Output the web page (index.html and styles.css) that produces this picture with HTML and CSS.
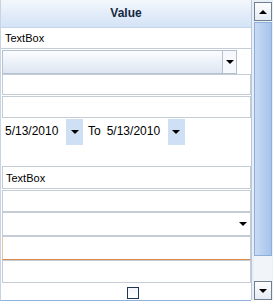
FILE: index.html
```html
<!DOCTYPE html>
<html lang="en">
<head>
    <meta charset="UTF-8">
    <title>Property Grid</title>
    <link rel="stylesheet" href="styles.css">
</head>
<body>
    <div class="grid">
        <div class="table">
            <div class="header">Value</div>

            <div class="row row-text">TextBox</div>

            <div class="row row-combo">
                <div class="combo">
                    <div class="combo-field"></div>
                    <div class="combo-btn"><span class="arrow"></span></div>
                </div>
            </div>

            <div class="row row-3"><div class="box"></div></div>
            <div class="row row-4"><div class="box"></div></div>

            <div class="row row-date">
                <div class="date">
                    <span class="date-text">5/13/2010</span>
                    <span class="date-btn"><span class="arrow"></span></span>
                </div>
                <span class="to">To</span>
                <div class="date">
                    <span class="date-text">5/13/2010</span>
                    <span class="date-btn"><span class="arrow"></span></span>
                </div>
            </div>

            <div class="row row-blank"></div>

            <div class="row row-7"><div class="box">TextBox</div></div>
            <div class="row row-8"><div class="box"></div></div>
            <div class="row row-9"><div class="box drop"><span class="arrow"></span></div></div>
            <div class="row row-10"><div class="box focused"></div></div>
            <div class="row row-11"><div class="box"></div></div>
            <div class="row row-check"><span class="check"></span></div>
        </div>

        <div class="scrollbar">
            <div class="sb-btn"><span class="arrow up"></span></div>
            <div class="sb-thumb"></div>
            <div class="sb-track"></div>
            <div class="sb-btn"><span class="arrow"></span></div>
        </div>
    </div>
</body>
</html>
```

FILE: styles.css
```css
body {
    margin: 0;
    font-family: 'Liberation Sans', Arial, sans-serif;
    font-size: 11px;
    color: #000;
    background: #fff;
}

.grid {
    display: flex;
    width: 274px;
    height: 304px;
}

.table {
    width: 250px;
    height: 300px;
    border-left: 1px solid #c8d4e3;
    border-bottom: 1px solid #8fb0da;
    display: flex;
    flex-direction: column;
}

.header {
    height: 27px;
    line-height: 27px;
    border-bottom: 1px solid #c6d6ea;
    background: linear-gradient(#f3f7fc, #d3e3f6);
    text-align: center;
    font-weight: bold;
    font-size: 12px;
    color: #15283f;
}

.row {
    display: flex;
    align-items: stretch;
    padding: 0 0 0 1px;
}

.row-text {
    height: 20px;
    line-height: 20px;
    padding-left: 4px;
    border-bottom: 1px solid #c4ccd6;
}

.box {
    flex: 1;
    border: 1px solid #c4ccd6;
    background: #fff;
    padding-left: 3px;
    display: flex;
    align-items: center;
}

.row-combo {
    height: 24px;
    padding-top: 1px;
}

.combo {
    width: 233px;
    display: flex;
    border: 1px solid #b6c1cf;
}

.combo-field {
    flex: 1;
    background: linear-gradient(#fbfcfe, #dde7f3);
}

.combo-btn {
    width: 13px;
    border-left: 1px solid #b6c1cf;
    background: #f5f8fc;
    display: flex;
    align-items: center;
    justify-content: center;
}

.arrow {
    width: 0;
    height: 0;
    border-left: 4px solid transparent;
    border-right: 4px solid transparent;
    border-top: 4px solid #000;
}

.arrow.up {
    border-top: none;
    border-bottom: 4px solid #000;
}

.row-3 {
    height: 21px;
}

.row-4 {
    height: 22px;
    padding-top: 1px;
}

.row-date {
    height: 26px;
    padding: 1px 0 0 2px;
    align-items: stretch;
}

.date {
    display: flex;
    align-items: stretch;
    background: #fff;
}

.date-text {
    font-size: 12px;
    line-height: 24px;
    padding-left: 2px;
    width: 61px;
}

.date-btn {
    width: 17px;
    background: #cfdff4;
    display: flex;
    align-items: center;
    justify-content: center;
}

.to {
    font-size: 12px;
    line-height: 24px;
    padding: 0 4px 0 5px;
}

.row-blank {
    height: 21px;
}

.row-7 {
    height: 23px;
}

.row-8 {
    height: 22px;
    padding-top: 1px;
}

.row-9 {
    height: 24px;
}

.drop {
    justify-content: flex-end;
    padding-right: 3px;
}

.row-10 {
    height: 24px;
}

.focused {
    border-left-color: #e9c3a4;
    border-bottom-color: #d98a4c;
}

.row-11 {
    height: 23px;
}

.row-check {
    flex: 1;
    justify-content: center;
    align-items: flex-end;
    padding-bottom: 1px;
}

.check {
    width: 10px;
    height: 10px;
    border: 1px solid #1d3550;
    background: linear-gradient(#f2f5f9, #fff);
    margin-left: 12px;
}

.scrollbar {
    width: 22px;
    height: 300px;
    border-left: 1px solid #b7c8dc;
    background: #e9eff7;
    display: flex;
    flex-direction: column;
    align-items: center;
    padding-top: 2px;
    box-sizing: border-box;
}

.sb-btn {
    width: 16px;
    height: 17px;
    border: 1px solid #6f7f90;
    background: linear-gradient(#fdfdfe, #e6ecf4);
    display: flex;
    align-items: center;
    justify-content: center;
    flex-shrink: 0;
}

.sb-thumb {
    width: 16px;
    height: 232px;
    margin-top: 1px;
    border: 1px solid #8daed9;
    background: linear-gradient(90deg, #c9dbf3, #b3cdef 60%, #a8c4ec);
}

.sb-track {
    flex: 1;
    width: 18px;
    background: #f1f4f9;
}
```
